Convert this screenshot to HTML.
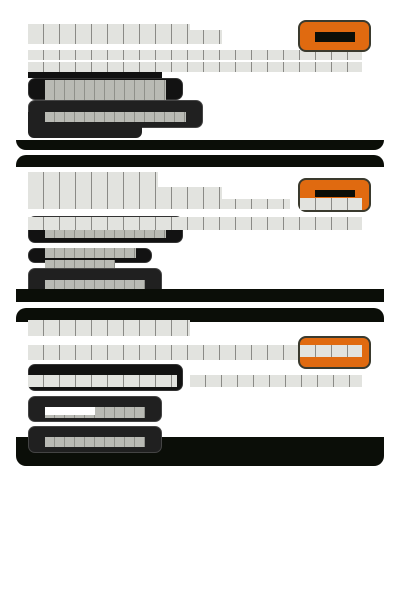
<!DOCTYPE html>
<html><head><meta charset="utf-8"><style>
html,body{margin:0;padding:0;background:#fff;width:400px;height:600px;overflow:hidden;font-family:"Liberation Sans",sans-serif}
div{position:absolute;box-sizing:border-box}
.t{background:repeating-linear-gradient(90deg,#e2e3df 0,#e2e3df 15px,#8a8a86 15px,#8a8a86 16px)}
.g{background:repeating-linear-gradient(90deg,#b9bab4 0,#b9bab4 9px,#8f908a 9px,#8f908a 10px)}
.band{background:#0b0e08}
.btn{background:#e06a10;border:2px solid #3a3a2e;border-radius:8px}
.bar{background:#0b0e08}
.p1{background:#121212;border-radius:7px;border:1px solid #333}
.p2{background:#202020;border-radius:7px;border:1px solid #444}
</style></head><body>
<!-- card 1 -->
<div class="t" style="left:28px;top:24px;width:162px;height:14px"></div>
<div class="t" style="left:28px;top:30px;width:194px;height:14px"></div>
<div class="t" style="left:28px;top:50px;width:334px;height:10px"></div>
<div class="t" style="left:28px;top:62px;width:334px;height:10px"></div>
<div class="btn" style="left:298px;top:20px;width:73px;height:32px"></div>
<div class="bar" style="left:315px;top:32px;width:40px;height:10px"></div>
<div style="left:28px;top:72px;width:134px;height:6px;background:#111"></div>
<div class="p1" style="left:28px;top:78px;width:155px;height:22px"></div>
<div class="g" style="left:45px;top:80px;width:121px;height:20px"></div>
<div class="p2" style="left:28px;top:100px;width:175px;height:28px"></div>
<div style="left:28px;top:112px;width:114px;height:26px;background:#202020;border-radius:0 0 6px 6px"></div>
<div class="g" style="left:45px;top:112px;width:141px;height:10px"></div>
<div class="band" style="left:16px;top:140px;width:368px;height:10px;border-radius:0 0 10px 10px"></div>
<!-- card 2 -->
<div class="band" style="left:16px;top:155px;width:368px;height:12px;border-radius:10px 10px 0 0"></div>
<div class="t" style="left:28px;top:172px;width:130px;height:15px"></div>
<div class="t" style="left:28px;top:187px;width:194px;height:12px"></div>
<div class="t" style="left:28px;top:199px;width:262px;height:10px"></div>
<div class="btn" style="left:298px;top:178px;width:73px;height:34px"></div>
<div class="bar" style="left:315px;top:190px;width:40px;height:7px"></div>
<div class="t" style="left:300px;top:198px;width:62px;height:12px"></div>
<div class="p1" style="left:28px;top:216px;width:155px;height:27px"></div>
<div class="t" style="left:28px;top:217px;width:334px;height:13px"></div>
<div class="g" style="left:45px;top:230px;width:121px;height:8px"></div>
<div class="p1" style="left:28px;top:248px;width:124px;height:15px"></div>
<div class="g" style="left:45px;top:248px;width:91px;height:10px"></div>
<div class="g" style="left:45px;top:260px;width:70px;height:8px"></div>
<div class="p2" style="left:28px;top:268px;width:134px;height:28px"></div>
<div class="g" style="left:45px;top:280px;width:100px;height:9px"></div>
<div class="band" style="left:16px;top:289px;width:368px;height:13px"></div>
<!-- card 3 -->
<div class="band" style="left:16px;top:308px;width:368px;height:14px;border-radius:10px 10px 0 0"></div>
<div class="t" style="left:28px;top:320px;width:162px;height:16px"></div>
<div class="t" style="left:28px;top:345px;width:334px;height:15px"></div>
<div class="btn" style="left:298px;top:336px;width:73px;height:33px"></div>
<div class="t" style="left:300px;top:345px;width:62px;height:12px"></div>
<div class="p1" style="left:28px;top:364px;width:155px;height:27px"></div>
<div class="t" style="left:28px;top:375px;width:149px;height:12px"></div>
<div class="t" style="left:190px;top:375px;width:172px;height:12px"></div>
<div class="p2" style="left:28px;top:396px;width:134px;height:26px"></div>
<div class="g" style="left:45px;top:407px;width:100px;height:11px"></div>
<div style="left:45px;top:407px;width:50px;height:8px;background:#fff"></div>
<div class="band" style="left:16px;top:437px;width:368px;height:29px;border-radius:0 0 10px 10px"></div>
<div class="p2" style="left:28px;top:426px;width:134px;height:27px"></div>
<div class="g" style="left:45px;top:437px;width:100px;height:10px"></div>
</body></html>
